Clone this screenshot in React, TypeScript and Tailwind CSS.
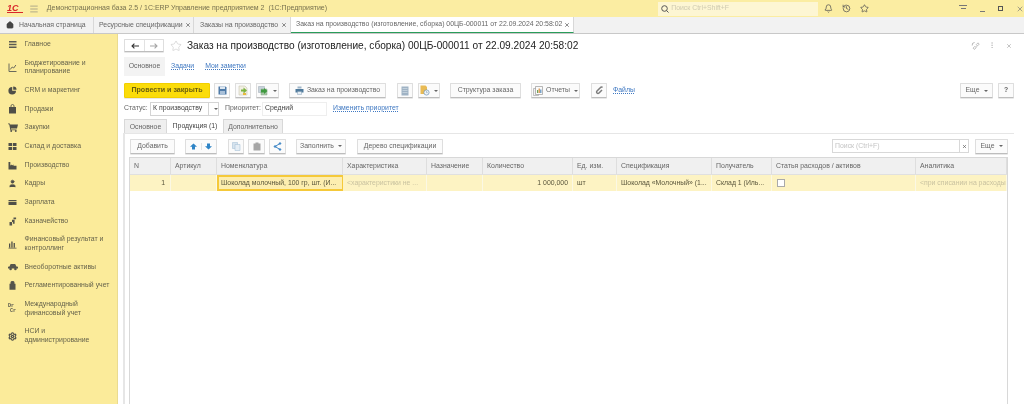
import React from "react";
import { Bell, Home, Menu, Settings, Star, History, User, X } from "lucide-react";

const Caret = () => <span className="ml-1 inline-block h-0 w-0 border-x-[2px] border-t-[2px] border-x-transparent border-t-[#666]" />;

const Btn: React.FC<{ className?: string; children?: React.ReactNode }> = ({ className = "", children }) => (
  <div
    className={
      "flex h-[15px] shrink-0 items-center justify-center rounded-[1px] border border-[#dedede] border-b-[#bdbdbd] bg-[#fbfbfb] text-[6.9px] text-[#666] shadow-[0_1px_0_#e8e8e8] " +
      className
    }
  >
    {children}
  </div>
);

const SaveIcon = () => (
  <svg width="9" height="9" viewBox="0 0 9 9">
    <path d="M0.5 0.5h7l1 1v7h-8z" fill="#4f7ba8" />
    <path d="M2 0.5h5v2.5H2z" fill="#dce6f0" />
    <path d="M2 5h5v3.5H2z" fill="#a9c0d8" />
  </svg>
);

const DocArrowIcon = () => (
  <svg width="10" height="11" viewBox="0 0 10 11">
    <path d="M1 1h6l2 2v7H1z" fill="#f1efe2" stroke="#c9c6b4" strokeWidth="0.6" />
    <path d="M3 4.5h2.5V2.5L9 5.5 5.5 8.5V6.5H3z" fill="#7cb342" />
    <path d="M5 8h3v2H5z" fill="#e8b93c" />
  </svg>
);

const DocsGreenIcon = () => (
  <svg width="11" height="10" viewBox="0 0 11 10">
    <path d="M0.5 0.5h6v6h-6z" fill="#c8d3db" stroke="#9aa7b0" strokeWidth="0.5" />
    <path d="M3 3h6v6H3z" fill="#a7c5a5" stroke="#8aa88a" strokeWidth="0.5" />
    <path d="M3 3.5h3V2l3.5 3L6 8V6.5H3z" fill="#3f9a3f" />
  </svg>
);

const PrintIcon = () => (
  <svg width="9" height="9" viewBox="0 0 9 9">
    <path d="M2.5 0.5h4v2h-4z" fill="#9fb4c6" />
    <path d="M0.5 3h8v3.5h-8z" fill="#4f7a9c" />
    <path d="M2.5 5.5h4v3h-4z" fill="#e4edf4" stroke="#6f8ea8" strokeWidth="0.4" />
  </svg>
);

const ListDocIcon = () => (
  <svg width="8" height="10" viewBox="0 0 8 10">
    <path d="M0.5 0.5h7v9h-7z" fill="#9fb2c4" />
    <path d="M1.5 2.5h5M1.5 4.5h5M1.5 6.5h5" stroke="#d9e2ea" strokeWidth="0.6" />
  </svg>
);

const DocClockIcon = () => (
  <svg width="10" height="11" viewBox="0 0 10 11">
    <path d="M0.5 0.5h5l1.5 1.5v7h-6.5z" fill="#e9bb55" />
    <circle cx="6.5" cy="7.5" r="2.6" fill="#eef3f7" stroke="#6f93b3" strokeWidth="0.7" />
    <path d="M6.5 6v1.6h1.2" stroke="#6f93b3" strokeWidth="0.5" fill="none" />
  </svg>
);

const ReportIcon = () => (
  <svg width="10" height="10" viewBox="0 0 10 10">
    <path d="M0.5 2.5h5v7h-5z" fill="#f2f2f2" stroke="#9a9a9a" strokeWidth="0.6" />
    <path d="M2.5 0.5h7v8h-7z" fill="#fafafa" stroke="#8a8a8a" strokeWidth="0.6" />
    <path d="M4 4h1.2v3H4z" fill="#6ea35a" />
    <path d="M5.6 2.5h1.2V7H5.6z" fill="#d98b3a" />
    <path d="M7.2 3.5h1.2V7H7.2z" fill="#5a8fc0" />
  </svg>
);

const ClipIcon = () => (
  <svg width="9" height="9" viewBox="0 0 9 9" fill="none" stroke="#7d7d7d" strokeWidth="1.5">
    <path d="M7.5 1.5a1.3 1.3 0 0 0-2 0L2 5a1.3 1.3 0 0 0 2 2l3-3" />
  </svg>
);

const ChainIcon = () => (
  <svg width="9" height="9" viewBox="0 0 9 9" fill="none" stroke="#9a9a9a" strokeWidth="0.7">
    <path d="M4 5.2L2.6 6.6a1 1 0 0 0 .9 1.6L5 6.8a1 1 0 0 0-.2-1.4" />
    <path d="M5 3.8l1.4-1.4a1 1 0 0 1 1.6.9L6.6 4.8a1 1 0 0 1-1.4 0" />
    <path d="M1.2 4.5a2.6 2.6 0 0 1 2.4-3" />
  </svg>
);

const ArrowBig: React.FC<{ dir: "left" | "right"; color: string }> = ({ dir, color }) => (
  <svg width="8" height="6" viewBox="0 0 8 6" fill="none" stroke={color} strokeWidth="1.1">
    {dir === "left" ? <path d="M8 3H1M3.4 .6L1 3l2.4 2.4" /> : <path d="M0 3h7M4.6 .6L7 3 4.6 5.4" />}
  </svg>
);

const ArrowUpDown: React.FC<{ up?: boolean }> = ({ up }) => (
  <svg width="7" height="7" viewBox="0 0 7 7" fill="#2e84c6">
    {up ? <path d="M3.5 .5L7 3.8H5V6.5H2V3.8H0z" /> : <path d="M3.5 6.5L7 3.2H5V.5H2V3.2H0z" />}
  </svg>
);

const menu: { icon: React.ReactNode; lines: string[] }[] = [
  {
    icon: (
      <svg width="9" height="9" viewBox="0 0 9 9" fill="#5b5b52">
        <path d="M1 1h7.5v1.5H1zM1 3.7h7.5v1.5H1zM1 6.5h7.5V8H1z" />
      </svg>
    ),
    lines: ["Главное"],
  },
  {
    icon: (
      <svg width="9" height="9" viewBox="0 0 9 9" fill="none" stroke="#6a6a5c" strokeWidth="1">
        <path d="M1 .5v8h7.5M2.2 6.5l2-2.5 1.5 1 2.2-3" />
      </svg>
    ),
    lines: ["Бюджетирование и", "планирование"],
  },
  {
    icon: (
      <svg width="9" height="9" viewBox="0 0 9 9" fill="#4f4f48">
        <path d="M4.2 1a3.8 3.8 0 1 0 3.8 3.8H4.2z" />
        <path d="M5.2 .4v3.4h3.4A3.4 3.4 0 0 0 5.2 .4z" />
      </svg>
    ),
    lines: ["CRM и маркетинг"],
  },
  {
    icon: (
      <svg width="9" height="10" viewBox="0 0 9 10" fill="#4f4f48">
        <path d="M1 3h7v6.5H1z" />
        <path d="M3 3V2a1.5 1.5 0 0 1 3 0v1" fill="none" stroke="#4f4f48" strokeWidth="0.8" />
      </svg>
    ),
    lines: ["Продажи"],
  },
  {
    icon: (
      <svg width="10" height="9" viewBox="0 0 10 9" fill="#4f4f48">
        <path d="M0 .5h1.8l.4 1H10L9 5.5H3L3.2 6.5H8.5v.7H2.4L1.2 1.2H0z" />
        <circle cx="3.2" cy="8" r=".9" />
        <circle cx="7.8" cy="8" r=".9" />
      </svg>
    ),
    lines: ["Закупки"],
  },
  {
    icon: (
      <svg width="9" height="9" viewBox="0 0 9 9" fill="#4f4f48">
        <path d="M.5 1h3.6v3.1H.5zM4.9 1h3.6v3.1H4.9zM.5 4.9h3.6V8H.5zM4.9 4.9h3.6V8H4.9z" />
      </svg>
    ),
    lines: ["Склад и доставка"],
  },
  {
    icon: (
      <svg width="9" height="9" viewBox="0 0 9 9" fill="#4f4f48">
        <path d="M.5 8.5V1h1.8v3.6l1.6-1.2v1.2l1.6-1.2v1.4h3V8.5z" />
      </svg>
    ),
    lines: ["Производство"],
  },
  { icon: <User size={9} fill="#4f4f48" strokeWidth={1.6} className="text-[#4f4f48]" />, lines: ["Кадры"] },
  {
    icon: (
      <svg width="9" height="9" viewBox="0 0 9 9" fill="#4f4f48">
        <path d="M.5 2h8v1.2h-8zM.5 4h8v3h-8z" />
      </svg>
    ),
    lines: ["Зарплата"],
  },
  {
    icon: (
      <svg width="9" height="9" viewBox="0 0 9 9" fill="#55554c">
        <path d="M1.5 5h2.6v3.5H1.5zM4 2.8h2.6v4H5V5H4zM5.5 .6h2.6v1.7H5.5z" />
      </svg>
    ),
    lines: ["Казначейство"],
  },
  {
    icon: (
      <svg width="9" height="9" viewBox="0 0 9 9" fill="#4f4f48">
        <path d="M1 3.5h1.3v4H1zM3.3 1.5h1.3v6H3.3zM5.6 3h1.3v4.5H5.6zM.5 7.8h8v.7h-8z" />
      </svg>
    ),
    lines: ["Финансовый результат и", "контроллинг"],
  },
  {
    icon: (
      <svg width="10" height="8" viewBox="0 0 10 8" fill="#55554c">
        <path d="M0 5.6V3.8l1.5-.4L2.6 1h4.6l1.2 2.4L10 3.8v1.8z" />
        <circle cx="2.6" cy="6" r="1.3" />
        <circle cx="7.4" cy="6" r="1.3" />
      </svg>
    ),
    lines: ["Внеоборотные активы"],
  },
  {
    icon: (
      <svg width="9" height="9" viewBox="0 0 9 9" fill="#55554c">
        <path d="M1.5 2.8h1V1.4a2 1.4 0 0 1 4 0v1.4h1V8.7h-6z" />
      </svg>
    ),
    lines: ["Регламентированный учет"],
  },
  {
    icon: (
      <div className="flex flex-col font-['Liberation_Mono',monospace] text-[5px] leading-[4.6px] font-bold text-[#55554c]">
        <span>Dr</span>
        <span className="ml-[2px]">Cr</span>
      </div>
    ),
    lines: ["Международный", "финансовый учет"],
  },
  {
    icon: <Settings size={9} strokeWidth={3} className="text-[#4f4f48]" />,
    lines: ["НСИ и", "администрирование"],
  },
];

const cols = [
  { title: "N", text: "1", width: "w-[41px]", cell: "justify-end pr-[5px]" },
  { title: "Артикул", text: "", width: "w-[46px]", cell: "pl-[4px]" },
  { title: "Номенклатура", text: "Шоколад молочный, 100 гр, шт. (И...", width: "w-[126px]", cell: "border-2 !border-[#f5c93a] bg-[#fdeeb0] pl-[2px]" },
  { title: "Характеристика", text: "<характеристики не ...", width: "w-[84px]", cell: "pl-[4px] text-[#c9c2a0]" },
  { title: "Назначение", text: "", width: "w-[56px]", cell: "pl-[4px]" },
  { title: "Количество", text: "1 000,000", width: "w-[90px]", cell: "justify-end pr-[4px]" },
  { title: "Ед. изм.", text: "шт", width: "w-[44px]", cell: "pl-[4px]" },
  { title: "Спецификация", text: "Шоколад «Молочный» (1...", width: "w-[95px]", cell: "pl-[4px]" },
  { title: "Получатель", text: "Склад 1 (Иль...", width: "w-[60px]", cell: "pl-[4px]" },
  { title: "Статья расходов / активов", text: "", width: "w-[144px]", cell: "pl-[5px]" },
  { title: "Аналитика", text: "<при списании на расходы", width: "w-[91px]", cell: "pl-[4px] text-[#c9c2a0]" },
];

const linkCls = "text-[#3f78c2] underline decoration-dotted";

const App: React.FC = () => {
  return (
    <div className="flex h-[404px] w-[1024px] flex-col overflow-hidden bg-white font-['Liberation_Sans',Arial,sans-serif] text-[#666] blur-[0.3px]">
      {/* title bar */}
      <div className="flex h-[17px] shrink-0 items-center bg-[#fbeda2]">
        <div className="ml-[7px] w-[16px] border-b border-[#d9262b] text-[9px] leading-[8px] font-bold text-[#d9262b] italic">1С</div>
        <Menu size={10} className="ml-[6px] text-[#777]" strokeWidth={1.4} />
        <span className="ml-[8px] w-[615px] text-[7px] whitespace-nowrap text-[#77714f]">
          Демонстрационная база 2.5 / 1С:ERP Управление предприятием 2 &nbsp;(1С:Предприятие)
        </span>
        <div className="flex h-[14px] w-[161px] items-center bg-[#fdf6d3] pl-[3px] text-[6.9px] text-[#cfcab0]">
          <svg width="8" height="8" viewBox="0 0 8 8" fill="none" stroke="#555" strokeWidth="1">
            <circle cx="3.5" cy="3.5" r="2.8" />
            <path d="M5.5 5.5L7.5 7.5" />
          </svg>
          <span className="ml-[2px]">Поиск Ctrl+Shift+F</span>
        </div>
        <Bell size={9} className="ml-[6px] text-[#555]" />
        <History size={9} className="ml-[9px] text-[#555]" />
        <Star size={9} className="ml-[9px] text-[#555]" />
        <div className="ml-[90px] h-[7px] w-[8px] border-t border-[#777]">
          <div className="mx-auto mt-[2px] h-[4px] w-[5px] border-t border-[#777]" />
        </div>
        <div className="mt-[5px] ml-[13px] h-px w-[5px] bg-[#777]" />
        <div className="ml-[13px] h-[5px] w-[5px] border border-[#555]" />
        <X size={8} className="ml-[13px] text-[#777]" />
      </div>

      {/* open tabs */}
      <div className="flex h-[17px] shrink-0 items-stretch border-b border-[#c8c8c8] bg-[#f2f2f2] text-[6.9px]">
        <div className="flex w-[94px] items-center border-r border-[#d8d8d8] pl-[6px]">
          <Home size={8} fill="#444" className="text-[#444]" />
          <span className="ml-[5px]">Начальная страница</span>
        </div>
        <div className="flex w-[100px] items-center border-r border-[#d8d8d8] pl-[5px]">
          <span>Ресурсные спецификации</span>
          <X size={6} strokeWidth={3} className="ml-[2px]" />
        </div>
        <div className="flex w-[97px] items-center border-r border-[#d8d8d8] pl-[6px]">
          <span>Заказы на производство</span>
          <X size={6} strokeWidth={3} className="ml-[3px]" />
        </div>
        <div className="flex w-[283px] items-center border-r border-b border-r-[#d8d8d8] border-b-[#2a9d5a] bg-white pl-[5px]">
          <span className="whitespace-nowrap">Заказ на производство (изготовление, сборка) 00ЦБ-000011 от 22.09.2024 20:58:02</span>
          <X size={6} strokeWidth={3} className="ml-[2px]" />
        </div>
      </div>

      <div className="flex min-h-0 flex-1">
        {/* section menu */}
        <div className="w-[118px] shrink-0 border-r border-[#eadb90] bg-[#fbeb9a] pt-px text-[6.9px] leading-[8.8px] text-[#66634c]">
          {menu.map((m) => (
            <div key={m.lines[0]} className={"flex items-center pl-[8px] " + (m.lines.length > 1 ? "h-[27.3px]" : "h-[18.7px]")}>
              <span className="flex w-[16.5px] shrink-0">{m.icon}</span>
              <div>
                {m.lines.map((l) => (
                  <div key={l} className="whitespace-nowrap">{l}</div>
                ))}
              </div>
            </div>
          ))}
        </div>

        {/* document form */}
        <div className="flex min-w-0 flex-1 flex-col pt-[4px] pr-[10px] pl-[6px]">
          <div className="flex h-[15px] shrink-0 items-center">
            <div className="flex h-[13px] w-[40px] rounded-[1px] border border-[#dedede] border-b-[#bdbdbd] shadow-[0_1px_0_#e8e8e8]">
              <span className="flex w-[20px] items-center justify-center border-r border-[#e2e2e2]"><ArrowBig dir="left" color="#333" /></span>
              <span className="flex flex-1 items-center justify-center"><ArrowBig dir="right" color="#a5a5a5" /></span>
            </div>
            <Star size={12} strokeWidth={1} className="ml-[6px] text-[#bbb]" />
            <span className="ml-[5px] text-[10.15px] whitespace-nowrap text-[#222]">
              Заказ на производство (изготовление, сборка) 00ЦБ-000011 от 22.09.2024 20:58:02
            </span>
            <span className="ml-auto"><ChainIcon /></span>
            <span className="ml-[11px] text-[8px] text-[#888]">⁝</span>
            <X size={6} className="mr-[2px] ml-[13px] text-[#888]" />
          </div>

          <div className="mt-[4px] flex h-[19px] shrink-0 items-center text-[6.9px]">
            <div className="flex h-full w-[41px] items-center justify-center bg-[#f3f3f3]">Основное</div>
            <span className={"ml-[6px] " + linkCls}>Задачи</span>
            <span className={"ml-[11px] " + linkCls}>Мои заметки</span>
          </div>

          <div className="mt-[7px] flex h-[15px] shrink-0 items-center">
            <Btn className="w-[86px] !border-[#f2cf00] !bg-[#fbdc0a] text-[7.1px] font-bold !text-[#6a5f10]">Провести и закрыть</Btn>
            <Btn className="ml-[4px] w-[16px]"><SaveIcon /></Btn>
            <Btn className="ml-[5px] w-[16px]"><DocArrowIcon /></Btn>
            <Btn className="ml-[5px] w-[23px]"><DocsGreenIcon /><Caret /></Btn>
            <Btn className="ml-[10px] w-[97px]"><span className="mr-[3px]"><PrintIcon /></span>Заказ на производство</Btn>
            <Btn className="ml-[11px] w-[16px]"><ListDocIcon /></Btn>
            <Btn className="ml-[5px] w-[22px]"><DocClockIcon /><Caret /></Btn>
            <Btn className="ml-[10px] w-[71px]">Структура заказа</Btn>
            <Btn className="ml-[10px] w-[49px]"><span className="mr-[3px]"><ReportIcon /></span>Отчеты<Caret /></Btn>
            <Btn className="ml-[11px] w-[16px]"><ClipIcon /></Btn>
            <span className={"ml-[6px] text-[6.9px] " + linkCls}>Файлы</span>
            <Btn className="ml-auto w-[33px]">Еще<Caret /></Btn>
            <Btn className="ml-[5px] w-[16px] font-bold">?</Btn>
          </div>

          <div className="mt-[3px] flex h-[15px] shrink-0 items-center text-[6.9px]">
            <span className="w-[26px]">Статус:</span>
            <div className="flex h-[14px] w-[69px] items-center border border-[#d4d4d4] pl-[2px] text-[#444]">
              <span className="flex-1">К производству</span>
              <span className="flex h-full w-[10px] items-center justify-center border-l border-[#d4d4d4]"><Caret /></span>
            </div>
            <span className="ml-[6px] w-[37px]">Приоритет:</span>
            <div className="flex h-[14px] w-[65px] items-center border border-[#eee] pl-[2px] text-[#444]">Средний</div>
            <span className={"ml-[6px] " + linkCls}>Изменить приоритет</span>
          </div>

          {/* page tabs */}
          <div className="mt-[3px] flex h-[15px] shrink-0 items-stretch text-[6.9px]">
            <div className="flex w-[43px] items-center justify-center border border-b-0 border-[#d8d8d8] bg-[#efefef]">Основное</div>
            <div className="flex w-[56px] items-center justify-center bg-white text-[#444]">Продукция (1)</div>
            <div className="flex w-[60px] items-center justify-center border border-b-0 border-[#d8d8d8] bg-[#efefef]">Дополнительно</div>
          </div>

          <div className="-mt-px -ml-px flex min-h-0 flex-1 flex-col border-t border-l-2 border-[#e6e6e6] pt-[5px] pr-[6px] pl-[5px]">
            <div className="flex h-[14px] shrink-0 items-center">
              <Btn className="w-[45px]">Добавить</Btn>
              <Btn className="ml-[10px] w-[32px]">
                <span className="flex flex-1 justify-center border-r border-[#e2e2e2]"><ArrowUpDown up /></span>
                <span className="flex flex-1 justify-center"><ArrowUpDown /></span>
              </Btn>
              <Btn className="ml-[11px] w-[16px]">
                <svg width="9" height="9" viewBox="0 0 9 9">
                  <path d="M.5 .5h5v6h-5z" fill="#d6e3ee" stroke="#a9c3d8" strokeWidth=".6" />
                  <path d="M3 2.5h5v6H3z" fill="#e6eef5" stroke="#a9c3d8" strokeWidth=".6" />
                </svg>
              </Btn>
              <Btn className="ml-[4px] w-[17px]">
                <svg width="8" height="9" viewBox="0 0 8 9" fill="#a6a6a6">
                  <path d="M.5 1.5h2V.5h3v1h2v7h-7z" />
                </svg>
              </Btn>
              <Btn className="ml-[4px] w-[17px]">
                <svg width="9" height="9" viewBox="0 0 9 9" fill="#3d86c6" stroke="#3d86c6">
                  <path d="M7 1.5L2 4.5L7 7.5" fill="none" />
                  <circle cx="2" cy="4.5" r="0.8" />
                  <circle cx="7" cy="1.5" r="0.8" />
                  <circle cx="7" cy="7.5" r="0.8" />
                </svg>
              </Btn>
              <Btn className="ml-[10px] w-[50px]">Заполнить<Caret /></Btn>
              <Btn className="ml-[11px] w-[86px]">Дерево спецификации</Btn>
              <div className="ml-auto flex h-[14px] w-[137px] items-center border border-[#d8d8d8] pl-[2px] text-[6.9px] text-[#c4c4c4]">
                <span className="flex-1">Поиск (Ctrl+F)</span>
                <span className="flex h-full w-[9px] items-center justify-center border-l border-[#d8d8d8]"><X size={5} strokeWidth={3} className="text-[#555]" /></span>
              </div>
              <Btn className="ml-[6px] w-[33px]">Еще<Caret /></Btn>
            </div>

            {/* table */}
            <div className="mt-[4px] -ml-px flex min-h-0 flex-1 flex-col border-x border-t border-[#d8d8d8] text-[6.9px]">
              <div className="flex h-[17px] shrink-0 border-b border-[#e0e0e0] bg-[#f0f0f0]">
                {cols.map((c) => (
                  <div key={c.title} className={"flex shrink-0 items-center border-r border-[#dedede] pl-[4px] whitespace-nowrap " + c.width}>
                    {c.title}
                  </div>
                ))}
              </div>
              <div className="flex h-[16px] shrink-0 bg-[#fdf3c3] text-[#5a563c]">
                {cols.map((c) => (
                  <div key={c.title} className={"flex shrink-0 items-center overflow-hidden border-r border-[#fbf8e4] whitespace-nowrap " + c.width + " " + c.cell}>
                    {c.title === "Статья расходов / активов" ? <span className="h-[8px] w-[8px] border border-[#aaa] bg-white" /> : c.text}
                  </div>
                ))}
              </div>
            </div>
          </div>
        </div>
      </div>
    </div>
  );
};

export default App;
